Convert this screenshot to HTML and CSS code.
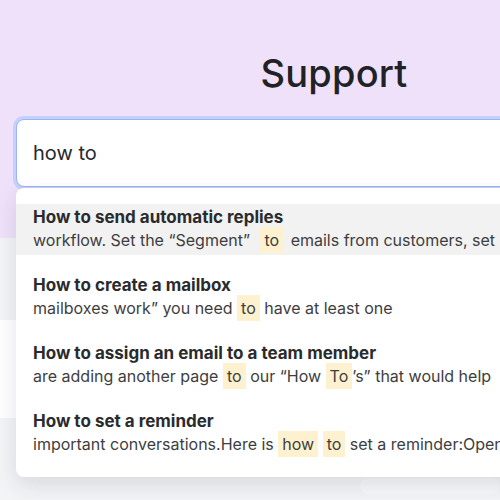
FILE: index.html
```html
<!DOCTYPE html>
<html lang="en">
<head>
<meta charset="utf-8">
<title>Support</title>
<link rel="stylesheet" href="styles.css">
</head>
<body>
<div class="page">
  <header class="hero">
    <h1 class="title">Support</h1>
    <div class="search">
      <div class="search-input">how to</div>
      <div class="dropdown">
        <div class="item active">
          <div class="item-title">How to send automatic replies</div>
          <div class="item-snippet">workflow. Set the “Segment” <mark class="wide">to</mark> emails from customers, set</div>
        </div>
        <div class="item">
          <div class="item-title">How to create a mailbox</div>
          <div class="item-snippet">mailboxes work” you need <mark>to</mark> have at least one</div>
        </div>
        <div class="item">
          <div class="item-title">How to assign an email to a team member</div>
          <div class="item-snippet">are adding another page <mark>to</mark> our “How <mark>To</mark>’s” that would help</div>
        </div>
        <div class="item">
          <div class="item-title">How to set a reminder</div>
          <div class="item-snippet">important conversations.Here is <mark>how</mark> <mark>to</mark> set a reminder:Open</div>
        </div>
      </div>
    </div>
  </header>
  <main class="content">
    <div class="card"></div>
    <div class="pill"></div>
  </main>
</div>
</body>
</html>
```

FILE: styles.css
```css
html, body {
  margin: 0;
  padding: 0;
}
body {
  background: #f3f4f6;
  font-family: Inter, "Noto Sans", sans-serif;
  overflow: hidden;
  width: 500px;
  height: 500px;
}
.page {
  width: 700px;
}
.hero {
  background: #efe1f9;
  padding: 50px 0 51px 16px;
  height: 137px;
}
.title {
  margin: 0;
  width: 636px;
  text-align: center;
  font-size: 38px;
  line-height: 46px;
  font-weight: 500;
  color: #202226;
  letter-spacing: 0.2px;
}
.search {
  position: relative;
  margin-top: 23px;
  width: 636px;
}
.search-input {
  box-sizing: border-box;
  height: 68px;
  background: #fff;
  border: 1px solid #9db2f7;
  box-shadow: 0 0 0 3px #c4d1fc;
  border-radius: 8px;
  display: flex;
  align-items: center;
  padding-left: 16px;
  font-size: 20px;
  color: #26282c;
}
.dropdown {
  position: absolute;
  left: 0;
  right: 0;
  top: 69px;
  background: #fff;
  border-radius: 8px;
  box-shadow: 0 8px 22px rgba(30, 40, 60, 0.13);
  padding: 16px 0 18px;
  display: flex;
  flex-direction: column;
  gap: 17px;
  z-index: 2;
}
.item {
  padding: 3px 16px 2px 17px;
}
.item.active {
  background: #f2f2f2;
}
.item-title {
  font-size: 17px;
  line-height: 20px;
  font-weight: 700;
  color: #2a2b2d;
  white-space: nowrap;
}
.item-snippet {
  font-size: 16px;
  line-height: 26px;
  color: #3d3e40;
  white-space: nowrap;
}
mark {
  background: #fdf1cf;
  color: inherit;
  padding: 3px 4px;
}
mark.wide {
  margin: 0 3px 0 6px;
}
.content {
  padding-top: 82px;
  position: relative;
}
.card {
  height: 98px;
  width: 640px;
  background: #fff;
}
.pill {
  margin: 60px 0 0 360px;
  width: 140px;
  height: 16px;
  border-radius: 8px;
  background: #f7f8f9;
}
```
